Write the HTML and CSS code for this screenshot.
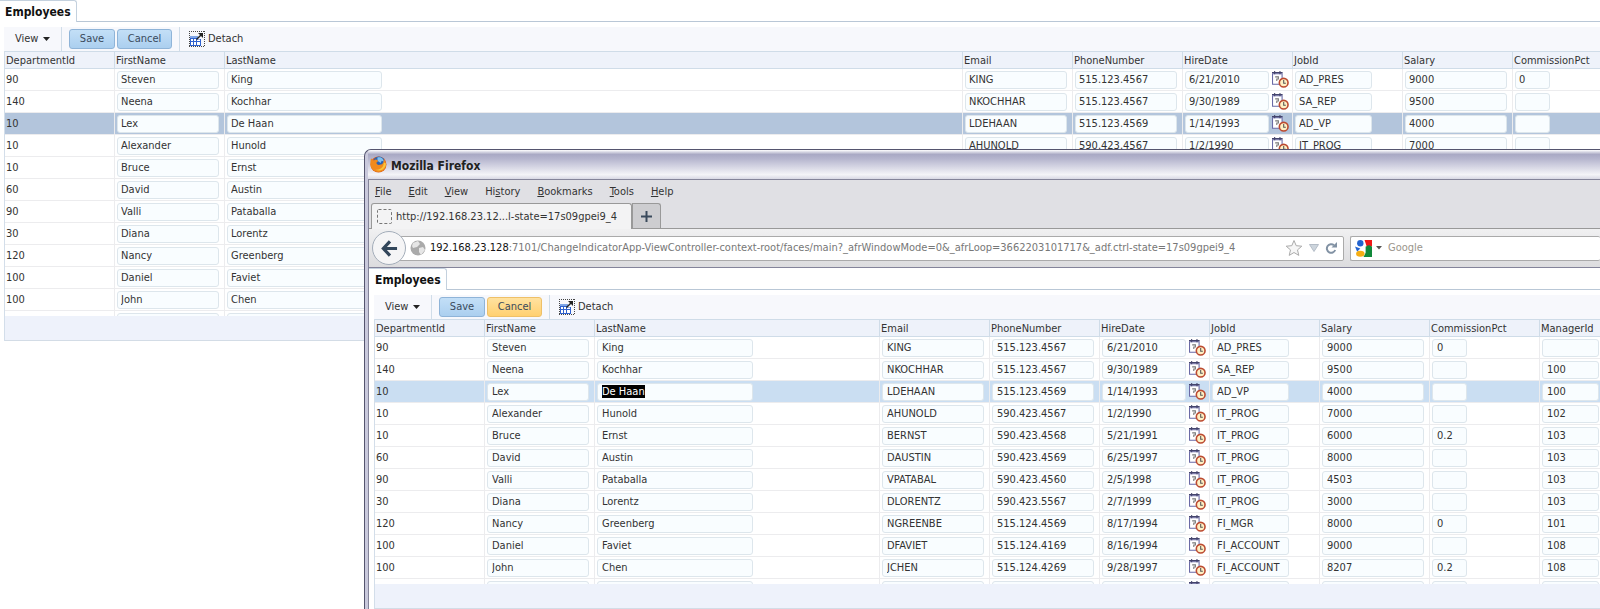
FILE: index.html
```html
<!DOCTYPE html>
<html lang="en">
<head>
<meta charset="utf-8">
<title>Employees</title>
<link rel="stylesheet" href="styles.css">
</head>
<body>
<svg class="defs" aria-hidden="true">
  <symbol id="i-detach" viewBox="0 0 16 16">
    <path d="M0 .5h16M0 15.500h16M.5 0v16M15.500 0v16" stroke="#444" stroke-dasharray="1 1" fill="none"/>
    <path d="M1 5h8v3h3v7H1z" fill="#2f62cf"/>
    <path d="M1 5h8v2H1z" fill="#7fa6e8"/>
    <path d="M2 8h2v2H2zM5 8h2v2H5zM8 8.500h3v1.500H8zM2 11h2v3H2zM5 11h2v3H5zM8 11h3v3H8z" fill="#fff"/>
    <path d="M7.500 8.500 12.500 3.500" stroke="#222" stroke-width="1.500" fill="none"/>
    <path d="M9 2h5v5z" fill="#222"/>
  </symbol>
  <symbol id="i-date" viewBox="0 0 16 16">
    <path d="M.5 2.500h9v10h-9z" fill="#fff" stroke="#6a6aa6"/>
    <path d="M0 1.500h2M3 1.500h4M8 1.500h2M2.500 0v3M7.500 0v3" stroke="#44446c" fill="none"/>
    <path d="M3 5.500h3v2H4.500v2" stroke="#777" fill="none"/>
    <circle cx="11" cy="11" r="4.100" fill="#fff0c4" stroke="#bc4a30" stroke-width="1.500"/>
    <path d="M11 8.500V11.500h2" stroke="#555" fill="none"/>
  </symbol>
</svg>

<main class="page">
  <div class="tabs"><h1 class="tab">Employees</h1></div>
  <section class="panel" data-grid="main"></section>
</main>

<section class="window" aria-label="Mozilla Firefox">
  <header class="titlebar">
    <svg class="fox" viewBox="0 0 16 16" aria-hidden="true">
      <circle cx="8" cy="8" r="7.500" fill="#d9601a"/>
      <circle cx="8.500" cy="6" r="5.500" fill="#2a62b4"/>
      <path d="M7 1.500c3-1 6 1 6 4-1-1-2-1-2-1l-1 2-3-2z" fill="#7fc0ee"/>
      <path d="M1 2c1 1 1 2 3 2 1-1 2-1 3 0 1 1 0 2-1 2 0 2 2 3 4 2 2 0 3-2 3-5 2 2 3 6 1 9-3 4-9 4-12 0C0 10 0 6 1 2z" fill="#f08a1c"/>
      <path d="M15 7c0 5-5 8-10 6 4 0 8-2 8-7z" fill="#fbc53a"/>
    </svg>
    <span>Mozilla Firefox</span>
  </header>
  <div class="chrome">
    <nav class="menu">
      <button><u>F</u>ile</button><button><u>E</u>dit</button><button><u>V</u>iew</button><button>Hi<u>s</u>tory</button><button><u>B</u>ookmarks</button><button><u>T</u>ools</button><button><u>H</u>elp</button>
    </nav>
    <div class="tabstrip">
      <button class="btab">
        <svg viewBox="0 0 15 15" aria-hidden="true"><rect x=".5" y=".5" width="14" height="14" rx="1" fill="none" stroke="#777" stroke-dasharray="3 2"/></svg>
        <span>http://192.168.23.12...l-state=17s09gpei9_4</span>
      </button>
      <button class="newtab" aria-label="New tab"><svg viewBox="0 0 11 11" aria-hidden="true"><path d="M5.500 0v11M0 5.500h11" stroke="#3a4a5c" stroke-width="2"/></svg></button>
    </div>
    <div class="nav">
      <button class="back" aria-label="Back"><svg viewBox="0 0 18 18" aria-hidden="true"><path d="M9.500 1.500 2.500 9l7 7.500M3 9h14" stroke="#33475b" stroke-width="3.400" fill="none"/></svg></button>
      <div class="url">
        <svg class="globe" viewBox="0 0 16 16" aria-hidden="true"><circle cx="8" cy="8" r="7.500" fill="#aaa"/><path d="M3 3l5-2 2 3-3 3-4 1-1-2zM9 8l4-1 2 3-4 5-2-3z" fill="#e6e6e6"/></svg>
        <p class="address"><b>192.168.23.128</b>:7101/ChangeIndicatorApp-ViewController-context-root/faces/main?_afrWindowMode=0&amp;_afrLoop=3662203101717&amp;_adf.ctrl-state=17s09gpei9_4</p>
        <button aria-label="Bookmark"><svg class="star" viewBox="0 0 18 18" aria-hidden="true"><path d="M9 1.500l2.200 5.200 5.600.5-4.300 3.700 1.300 5.500L9 13.500l-4.800 2.900 1.300-5.500L1.200 7.200l5.600-.5z" fill="#f6f6f6" stroke="#aaa"/></svg></button>
        <button aria-label="History"><svg class="drop" viewBox="0 0 10 8" aria-hidden="true"><path d="M.5.500h9L5 7.500z" fill="#cdd5dd" stroke="#b4bdc7"/></svg></button>
        <button aria-label="Reload"><svg class="reload" viewBox="0 0 12 12" aria-hidden="true"><path d="M9 3.200A4.300 4.300 0 1 0 10.200 8" stroke="#8292a4" stroke-width="2" fill="none"/><path d="M12 0v5.500H6.500z" fill="#8292a4"/></svg></button>
      </div>
      <div class="search">
        <svg class="google" viewBox="0 0 16 16" aria-hidden="true"><path d="M9 0h7v6H11z" fill="#f01818"/><path d="M10 6h6v10H8l2-4z" fill="#11893a"/><circle cx="5" cy="3" r="3" fill="#2363cf"/><path d="M0 6l5 2-3 3z" fill="#2363cf"/><circle cx="13" cy="7.500" r="2.500" fill="#11893a"/><ellipse cx="5" cy="13" rx="4" ry="2.800" fill="#f5ae14"/></svg>
        <svg class="caret" viewBox="0 0 6 4" aria-hidden="true"><path d="M0 0h6L3 3.500z" fill="#555"/></svg>
        <input type="text" aria-label="Search" placeholder="Google">
      </div>
    </div>
  </div>
  <div class="content">
    <div class="tabs"><h2 class="tab">Employees</h2></div>
    <section class="panel" data-grid="popup"></section>
  </div>
</section>
<script src="script.js"></script>
</body>
</html>
```
FILE: styles.css
```css
* { box-sizing: border-box; }
html, body { height: 100%; }
body {
  margin: 0;
  overflow: hidden;
  position: relative;
  background: #fff;
  color: #333;
  font: 11px/14px "DejaVu Sans Condensed", "DejaVu Sans", sans-serif;
}
button, input { font: inherit; color: inherit; }
button { border: 0; padding: 0; background: none; }
svg { display: block; flex: none; }
.defs { position: absolute; width: 0; height: 0; }

/* Page tabs and toolbar */
.tabs { height: 22px; border-bottom: 1px solid #b9c7d6; display: flex; }
.tab {
  margin: 0 0 -1px;
  height: 22px;
  padding: 4px 5px 0 5px;
  background: #fff;
  border: solid #c4d1de;
  border-width: 1px 1px 0 0;
  border-radius: 0 3px 0 0;
  color: #111;
  font: bold 12px/14px "DejaVu Sans Condensed", "DejaVu Sans", sans-serif;
}
.panel { margin: 5px 0 0 4px; }
.toolbar { display: flex; align-items: center; height: 24px; background: #f7f8fc; }
.view { width: 58px; height: 24px; padding-left: 11px; display: flex; align-items: center; gap: 5px; border-right: 1px solid #d0dde9; }
.view svg { width: 7px; height: 4px; }
.push { height: 20px; border: 1px solid #8fb4d8; border-radius: 3px; background: linear-gradient(#c3dff7, #abcfef); color: #3a4a5c; }
.save { width: 46px; margin-left: 7px; }
.cancel { width: 55px; margin-left: 2px; }
.cancel.hot { background: linear-gradient(#ffe2a0, #ffd070); border-color: #eec068; }
.detach { height: 24px; margin-left: 7px; padding-left: 9px; border-left: 1px solid #d0dde9; display: flex; align-items: center; gap: 3px; }
.detach svg { width: 16px; height: 16px; }

/* Data grid */
.viewport { height: 265px; overflow: hidden; }
table { width: 100%; table-layout: fixed; border-collapse: separate; border-spacing: 0; }
.grid { border-left: 1px solid #d3deea; }
col.std { width: 110px; }
col.pct { width: 87px; }
col.mgr { width: 60px; }
th {
  height: 18px;
  padding: 2px 1px 0;
  background: #eef2fa;
  border: solid #cfdce8;
  border-width: 1px 1px 1px 0;
  text-align: left;
  font-weight: normal;
  line-height: 14px;
}
td { height: 22px; padding: 0 2px; border: solid #ececee; border-width: 0 1px 1px 0; white-space: nowrap; }
td:first-child { padding-left: 1px; }
th:last-child, td:last-child { border-right: 0; }
td input {
  display: block;
  width: 102px;
  height: 18px;
  padding: 0 3px;
  border: 1px solid #dde6ec;
  border-radius: 3px;
  background: #f9fdff;
  outline: none;
}
td input::selection { background: #000; color: #fff; }
.last input { width: 155px; }
.date div { display: flex; align-items: center; gap: 3px; }
.date input { width: 84px; }
.date svg { width: 17px; height: 17px; }
.job input { width: 77px; }
.commission input { width: 35px; }
.manager input { width: 57px; }
.picked td { background: #b3c5dc; }
.content .picked td { background: #cadef2; }
.content td input { padding-left: 4px; }
.content .last input { width: 156px; }
.foot { height: 25px; background: #eef2fb; border-bottom: 1px solid #d3dce6; }

/* Browser window */
.window {
  position: absolute;
  left: 364px;
  top: 149px;
  right: 0;
  bottom: 0;
  overflow: hidden;
  padding-left: 3px;
  background: #c9c9dc;
  border: solid #55556f;
  border-width: 1px 0 0 1px;
  border-radius: 7px 0 0 0;
}
.titlebar {
  display: flex;
  align-items: center;
  gap: 4px;
  height: 29px;
  padding: 2px 0 0 2px;
  background: linear-gradient(#fff, #a9a9c4 15%, #b5b5ce 30%, #f4f4f8 85%, #d8d8e4);
  color: #222;
  font: bold 12px/16px "DejaVu Sans", sans-serif;
  font-family: "DejaVu Sans Condensed", "DejaVu Sans", sans-serif;
}
.fox { width: 17px; height: 17px; margin-bottom: 2px; }
.chrome { border: solid #84849a; border-width: 1px 0 1px 1px; background: #e0e0e4; color: #333; }
.menu { display: flex; gap: 17px; height: 23px; padding-left: 6px; }
.tabstrip { display: flex; align-items: flex-end; height: 26px; padding-left: 2px; border-bottom: 1px solid #999; }
.btab { display: flex; align-items: center; gap: 4px; width: 261px; height: 26px; margin-bottom: -1px; padding-left: 5px; white-space: nowrap; border: 1px solid #999; border-bottom: 0; border-radius: 3px 3px 0 0; background: #f3f3f4; }
.btab svg { width: 15px; height: 15px; }
.newtab { display: flex; align-items: center; justify-content: center; width: 29px; height: 25px; border: 1px solid #999; border-bottom: 0; border-radius: 0 3px 0 0; background: #cdcdd0; }
.newtab svg { width: 11px; height: 11px; }
.nav { display: flex; align-items: center; height: 38px; padding-left: 3px; background: linear-gradient(#f0f0f1, #dcdcde); }
.back { z-index: 1; display: flex; align-items: center; justify-content: center; width: 34px; height: 34px; flex: none; border: 1px solid #a3adb9; border-radius: 50%; background: #f5f5f6; }
.back svg { width: 17px; height: 17px; }
.url, .search { display: flex; align-items: center; height: 25px; border: 1px solid #aaa; border-radius: 2px; background: #fff; }
.url { flex: 1; min-width: 0; margin-left: -8px; padding: 0 6px 0 11px; }
.globe { width: 16px; height: 16px; }
.address { flex: 1; min-width: 0; overflow: hidden; margin: 0 0 0 4px; color: #777; white-space: nowrap; }
.address b { color: #111; font-weight: normal; }
.star { width: 18px; height: 18px; }
.drop { width: 10px; height: 8px; margin: 0 6px; }
.reload { width: 12px; height: 12px; }
.search { width: 250px; flex: none; margin-left: 6px; border-right: 0; padding-left: 4px; }
.google { width: 17px; height: 17px; }
.caret { width: 6px; height: 4px; margin: 0 6px 0 4px; }
.search input { flex: 1; min-width: 0; border: 0; padding: 0; outline: none; background: none; }
.search input::placeholder { color: #9a958c; opacity: 1; }
.content { height: 100%; background: #fff; border-left: 1px solid #84849a; }
.content .tab { padding-left: 6px; }
.content .panel { margin-left: 5px; }
```
FILE: script.js
```js
const rows = [
  ["90", "Steven", "King", "KING", "515.123.4567", "6/21/2010", "AD_PRES", "9000", "0", ""],
  ["140", "Neena", "Kochhar", "NKOCHHAR", "515.123.4567", "9/30/1989", "SA_REP", "9500", "", "100"],
  ["10", "Lex", "De Haan", "LDEHAAN", "515.123.4569", "1/14/1993", "AD_VP", "4000", "", "100"],
  ["10", "Alexander", "Hunold", "AHUNOLD", "590.423.4567", "1/2/1990", "IT_PROG", "7000", "", "102"],
  ["10", "Bruce", "Ernst", "BERNST", "590.423.4568", "5/21/1991", "IT_PROG", "6000", "0.2", "103"],
  ["60", "David", "Austin", "DAUSTIN", "590.423.4569", "6/25/1997", "IT_PROG", "8000", "", "103"],
  ["90", "Valli", "Pataballa", "VPATABAL", "590.423.4560", "2/5/1998", "IT_PROG", "4503", "", "103"],
  ["30", "Diana", "Lorentz", "DLORENTZ", "590.423.5567", "2/7/1999", "IT_PROG", "3000", "", "103"],
  ["120", "Nancy", "Greenberg", "NGREENBE", "515.124.4569", "8/17/1994", "FI_MGR", "8000", "0", "101"],
  ["100", "Daniel", "Faviet", "DFAVIET", "515.124.4169", "8/16/1994", "FI_ACCOUNT", "9000", "", "108"],
  ["100", "John", "Chen", "JCHEN", "515.124.4269", "9/28/1997", "FI_ACCOUNT", "8207", "0.2", "108"],
  ["", "", "", "", "", "", "", "", "", ""]
];
const columns = ["DepartmentId", "FirstName", "LastName", "Email", "PhoneNumber", "HireDate", "JobId", "Salary", "CommissionPct", "ManagerId"];
const kinds = ["dept", "first", "last", "email", "phone", "date", "job", "salary", "commission", "manager"];

function cell(value, i) {
  if (i === 0) return `<td>${value}</td>`;
  const input = `<input type="text" aria-label="${columns[i]}" value="${value}">`;
  const body = kinds[i] === "date"
    ? `<div>${input}<svg aria-hidden="true"><use href="#i-date"/></svg></div>`
    : input;
  return `<td class="${kinds[i]}">${body}</td>`;
}

document.querySelectorAll("[data-grid]").forEach(panel => {
  const popup = panel.dataset.grid === "popup";
  const count = popup ? 10 : 9;
  const widths = columns.slice(0, count).map((c, i) =>
    i === 2 ? "<col>" : `<col class="${i === 9 ? "mgr" : i === 8 && !popup ? "pct" : "std"}">`).join("");
  panel.innerHTML = `
    <div class="toolbar">
      <button class="view">View <svg viewBox="0 0 7 4" aria-hidden="true"><path d="M0 0h7L3.500 4z" fill="#222"/></svg></button>
      <button class="push save">Save</button>
      <button class="push cancel${popup ? " hot" : ""}">Cancel</button>
      <button class="detach"><svg aria-hidden="true"><use href="#i-detach"/></svg>Detach</button>
    </div>
    <div class="grid">
      <div class="viewport">
        <table>
          <colgroup>${widths}</colgroup>
          <thead><tr>${columns.slice(0, count).map(c => `<th>${c}</th>`).join("")}</tr></thead>
          <tbody>${rows.map((r, n) => `<tr${n === 2 ? ' class="picked"' : ""}>${r.slice(0, count).map(cell).join("")}</tr>`).join("")}</tbody>
        </table>
      </div>
      <div class="foot"></div>
    </div>`;
});

const active = document.querySelector(".content .picked .last input");
active.focus({ preventScroll: true });
active.select();
```
